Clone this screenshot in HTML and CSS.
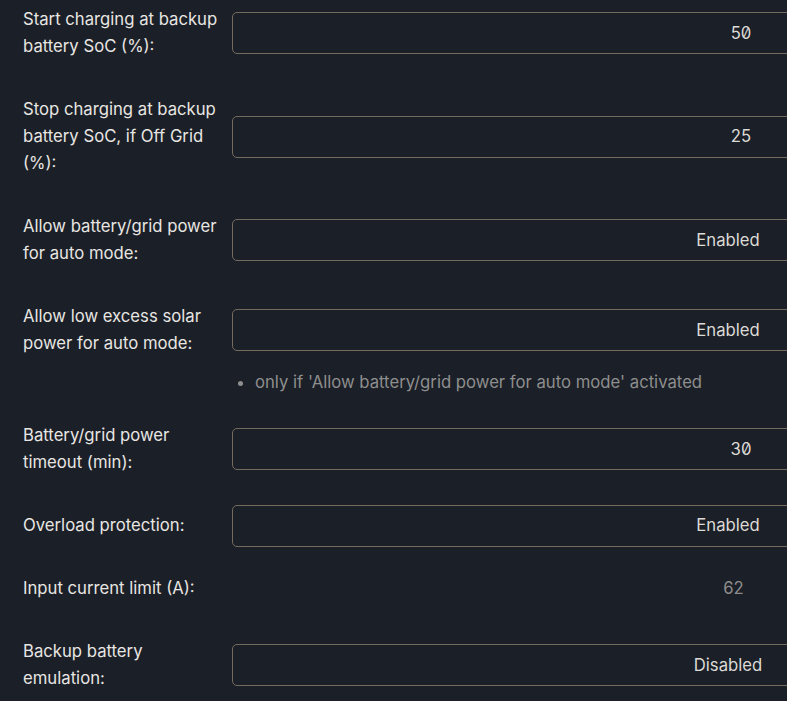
FILE: index.html
```html
<!DOCTYPE html>
<html lang="en">
<head>
  <meta charset="UTF-8" />
  <meta name="viewport" content="width=device-width, initial-scale=1" />
  <title>Charging settings</title>
  <link rel="stylesheet" href="styles.css">
</head>
<body>
  <div class="settings">
    <div class="row">
      <div class="label">Start charging at backup battery SoC (%):</div>
      <div class="field field-number">50</div>
    </div>
    <div class="row">
      <div class="label">Stop charging at backup battery SoC, if Off Grid (%):</div>
      <div class="field field-number">25</div>
    </div>
    <div class="row">
      <div class="label">Allow battery/grid power for auto mode:</div>
      <div class="field">Enabled</div>
    </div>
    <div class="row row-hinted">
      <div class="label">Allow low excess solar power for auto mode:</div>
      <div class="field">Enabled</div>
    </div>
    <ul class="hint">
      <li>only if 'Allow battery/grid power for auto mode' activated</li>
    </ul>
    <div class="row">
      <div class="label">Battery/grid power timeout (min):</div>
      <div class="field field-number">30</div>
    </div>
    <div class="row">
      <div class="label">Overload protection:</div>
      <div class="field">Enabled</div>
    </div>
    <div class="row">
      <div class="label">Input current limit (A):</div>
      <div class="readonly">62</div>
    </div>
    <div class="row">
      <div class="label">Backup battery emulation:</div>
      <div class="field">Disabled</div>
    </div>
  </div>
</body>
</html>
```

FILE: styles.css
```css
html, body {
  overflow: hidden;
}
body {
  margin: 0;
  background: #1b1f27;
  color: #e8e6e3;
  font-family: 'Inter', 'Noto Sans', sans-serif;
  font-size: 16.7px;
  line-height: 27px;
}
.settings {
  padding: 6px 0 0 23px;
}
.row {
  display: flex;
  align-items: center;
  margin-bottom: 36px;
}
.row-hinted {
  margin-bottom: 12px;
}
.label {
  width: 200px;
  flex-shrink: 0;
  margin-right: 9px;
  color: #e8e6e3;
}
.field {
  flex-shrink: 0;
  box-sizing: border-box;
  width: 992px;
  height: 42px;
  margin: -8px 0;
  border: 1px solid #736b5e;
  border-radius: 5px;
  display: flex;
  align-items: center;
  justify-content: center;
  color: #dcdad6;
}
.field-number {
  padding-left: 26px;
  font-variant-numeric: slashed-zero;
  font-feature-settings: "zero";
}
.readonly {
  flex-shrink: 0;
  width: 992px;
  padding-left: 11px;
  box-sizing: border-box;
  text-align: center;
  color: #8d8d8d;
}
.hint {
  margin: 0 0 26px 0;
  padding-left: 232px;
  color: #8e8e8e;
}
.hint li {
  list-style: disc;
}
```
